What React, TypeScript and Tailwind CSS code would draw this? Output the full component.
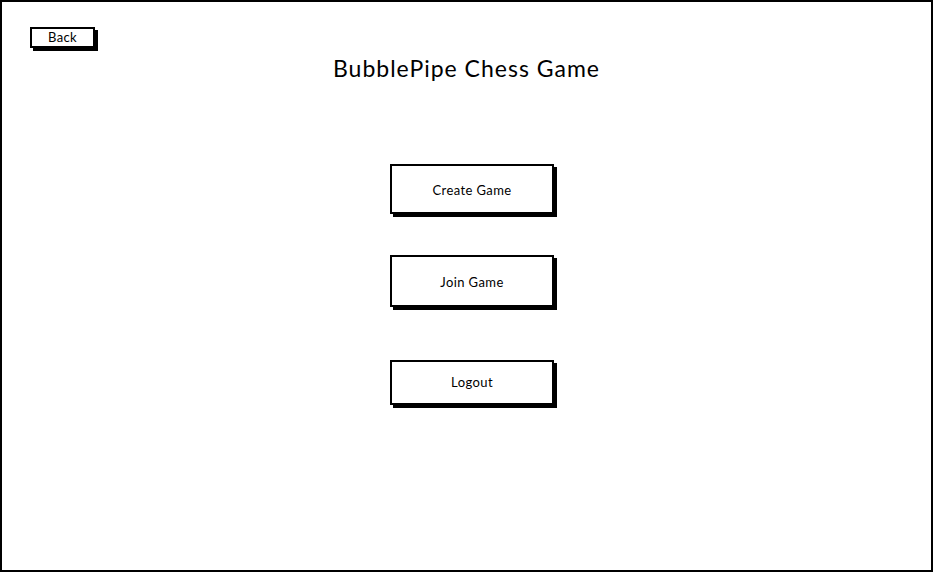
export default function App() {
  const font = { fontFamily: "Lato, 'Open Sans', sans-serif" };
  return (
    <div className="h-[573px] w-[933px] bg-white" style={font}>
      <div className="flex h-[572px] w-[933px] flex-col border-2 border-black">
        <div className="ml-[28px] mt-[25px]">
          <button className="flex h-[21px] w-[65px] items-center justify-center border-2 border-black bg-white pt-[1px] text-[13px] tracking-[0.3px] text-black shadow-[3px_3px_0_#000]">
            Back
          </button>
        </div>

        <h1 className="mt-[6px] text-center text-[23px] leading-[28px] tracking-[1px] text-black">
          BubblePipe Chess Game
        </h1>

        <div className="ml-[388px] mt-[82px] flex flex-col">
          <button className="flex h-[50px] w-[164px] items-center justify-center border-2 border-black bg-white pt-[3px] text-[13px] tracking-[0.4px] text-black shadow-[3px_3px_0_#000]">
            Create Game
          </button>
          <button className="mt-[41px] flex h-[52px] w-[164px] items-center justify-center border-2 border-black bg-white pt-[3px] text-[13px] tracking-[0.4px] text-black shadow-[3px_3px_0_#000]">
            Join Game
          </button>
          <button className="mt-[53px] flex h-[45px] w-[164px] items-center justify-center border-2 border-black bg-white pt-[1px] text-[13px] tracking-[0.4px] text-black shadow-[3px_3px_0_#000]">
            Logout
          </button>
        </div>
      </div>
    </div>
  );
}
